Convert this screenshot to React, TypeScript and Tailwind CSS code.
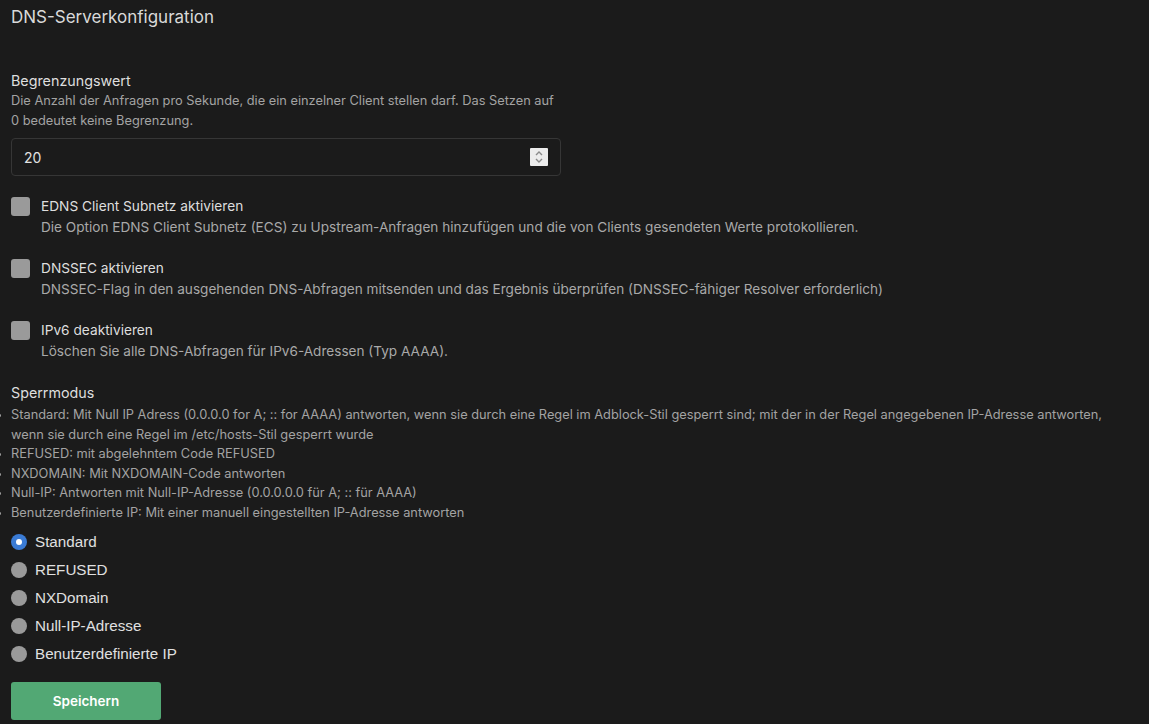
import { useState } from "react";

const font = { fontFamily: "Inter, 'Noto Sans', sans-serif" };

const toggles = [
  {
    label: "EDNS Client Subnetz aktivieren",
    desc: "Die Option EDNS Client Subnetz (ECS) zu Upstream-Anfragen hinzufügen und die von Clients gesendeten Werte protokollieren.",
  },
  {
    label: "DNSSEC aktivieren",
    desc: "DNSSEC-Flag in den ausgehenden DNS-Abfragen mitsenden und das Ergebnis überprüfen (DNSSEC-fähiger Resolver erforderlich)",
  },
  {
    label: "IPv6 deaktivieren",
    desc: "Löschen Sie alle DNS-Abfragen für IPv6-Adressen (Typ AAAA).",
  },
];

const modes = [
  "Standard: Mit Null IP Adress (0.0.0.0 for A; :: for AAAA) antworten, wenn sie durch eine Regel im Adblock-Stil gesperrt sind; mit der in der Regel angegebenen IP-Adresse antworten, wenn sie durch eine Regel im /etc/hosts-Stil gesperrt wurde",
  "REFUSED: mit abgelehntem Code REFUSED",
  "NXDOMAIN: Mit NXDOMAIN-Code antworten",
  "Null-IP: Antworten mit Null-IP-Adresse (0.0.0.0.0 für A; :: für AAAA)",
  "Benutzerdefinierte IP: Mit einer manuell eingestellten IP-Adresse antworten",
];

const radios = ["Standard", "REFUSED", "NXDomain", "Null-IP-Adresse", "Benutzerdefinierte IP"];

export default function App() {
  const [mode, setMode] = useState("Standard");

  return (
    <div className="min-h-[724px] bg-[#1b1b1b] px-[11px] pt-[6px] pb-[6px] text-[#dcdcdc]" style={font}>
      {/* Header */}
      <h1 className="text-[17px] leading-[22px] text-[#d9d9d9]">DNS-Serverkonfiguration</h1>

      {/* Rate limit */}
      <div className="mt-[43px] w-[550px]">
        <div className="text-[14.3px] leading-[20px] text-[#dedede]">Begrenzungswert</div>
        <p className="text-[12.8px] leading-[19.5px] text-[#a3a3a3]">
          Die Anzahl der Anfragen pro Sekunde, die ein einzelner Client stellen darf. Das Setzen auf 0 bedeutet keine Begrenzung.
        </p>
        <div className="mt-[8px] flex h-[38px] items-center justify-between rounded-[4px] border border-[#363636] bg-[#1b1b1b] pl-[12px] pr-[12px]">
          <span className="text-[14px] text-[#e2e2e2]">20</span>
          <div className="flex h-[18px] w-[18px] flex-col items-center justify-center rounded-[1px] bg-[#ececec]">
            <svg width="10" height="14" viewBox="0 0 10 14" fill="none" stroke="#8a8a8a" strokeWidth="1.4">
              <path d="M2 5 L5 2 L8 5" />
              <path d="M2 9 L5 12 L8 9" />
            </svg>
          </div>
        </div>
      </div>

      {/* Checkboxes */}
      <div className="mt-[20px] flex flex-col gap-[21px]">
        {toggles.map((t) => (
          <div key={t.label} className="flex gap-[11px]">
            <div className="mt-[1px] h-[19px] w-[19px] shrink-0 rounded-[3px] bg-[#9a9a9a]" />
            <div>
              <div className="text-[13.7px] leading-[20px] text-[#dedede]">{t.label}</div>
              <div className="mt-[1px] text-[13.6px] leading-[20px] text-[#a9a9a9]">{t.desc}</div>
            </div>
          </div>
        ))}
      </div>

      {/* Blocking mode */}
      <div className="mt-[22px]">
        <div className="text-[14.3px] leading-[20px] text-[#dedede]">Sperrmodus</div>
        <ul className="mt-[2px] list-disc pl-0 pr-[20px] text-[12.8px] leading-[19.5px] text-[#a3a3a3] [&>li]:marker:text-[9px]">
          {modes.map((m) => (
            <li key={m}>{m}</li>
          ))}
        </ul>
      </div>

      <div className="mt-[10px] flex flex-col gap-[8px]" style={{ fontFamily: "'Liberation Sans', Arial, sans-serif" }}>
        {radios.map((r) => (
          <label key={r} className="flex h-[20px] cursor-pointer items-center gap-[8px]" onClick={() => setMode(r)}>
            {mode === r ? (
              <span className="flex h-[16px] w-[16px] items-center justify-center rounded-full bg-[#3a7bd5]">
                <span className="h-[6px] w-[6px] rounded-full bg-white" />
              </span>
            ) : (
              <span className="h-[16px] w-[16px] rounded-full bg-[#9a9a9a]" />
            )}
            <span className="text-[15.2px] text-[#e0e0e0]">{r}</span>
          </label>
        ))}
      </div>

      <button className="mt-[18px] h-[38px] w-[150px] rounded-[3px] bg-[#52a874] text-[13.5px] font-semibold text-white">
        Speichern
      </button>
    </div>
  );
}
